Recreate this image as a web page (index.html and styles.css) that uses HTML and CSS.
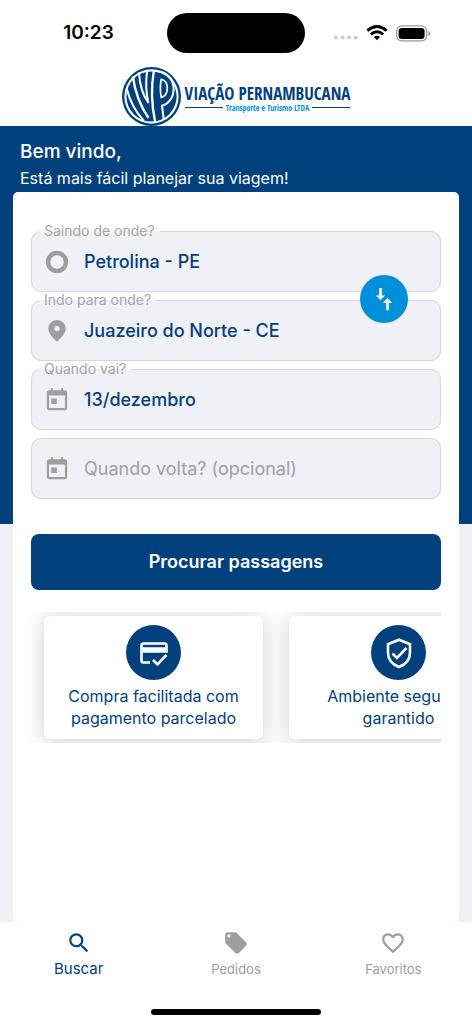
FILE: index.html
```html
<!DOCTYPE html>
<html lang="pt-BR">
<head>
<meta charset="utf-8">
<meta name="viewport" content="width=device-width, initial-scale=1">
<title>Viação Pernambucana</title>
<link rel="stylesheet" href="styles.css">
</head>
<body>
<div class="app">
  <div class="status">
    <span class="time">10:23</span>
    <span class="island"></span>
    <span class="signals">
      <svg width="24" height="5" viewBox="0 0 24 5" fill="#ccc"><circle cx="2" cy="2.5" r="2.1"/><circle cx="8.600" cy="2.500" r="2.100"/><circle cx="15.200" cy="2.500" r="2.100"/><circle cx="21.800" cy="2.500" r="2.100"/></svg>
      <svg width="22" height="16" viewBox="0 0 22 16" fill="none" stroke="#000" stroke-width="2.900"><path d="M1.400 5.600Q11-2.600 20.600 5.600"/><path d="M4.900 9.300Q11 4.100 17.100 9.300"/><path d="M7.900 12Q11 9.300 14.100 12L11 15.300Z" fill="#000" stroke="none"/></svg>
      <svg width="35" height="17" viewBox="0 0 35 17"><rect x=".7" y=".9" width="30" height="15" rx="5" fill="none" stroke="#999" stroke-width="1.200"/><rect x="2.600" y="2.900" width="26" height="11" rx="3.200"/><path d="M32.500 6v5q1.700-.8 1.700-2.500T32.500 6" fill="#888"/></svg>
    </span>
  </div>

  <header class="brand">
    <svg class="emblem" viewBox="10 8 174 174" role="img" aria-label="VP">
      <circle cx="97" cy="95" r="87" fill="#00407d"/>
      <circle cx="97" cy="95" r="80" fill="#fff"/>
      <circle cx="97" cy="95" r="74" fill="#00407d"/>
      <g fill="none" stroke="#fff" stroke-width="6">
        <path d="M24 72C33 108 48 138 74 166"/>
        <path d="M42 36C48 80 62 120 88 158" stroke-width="7"/>
        <path d="M60 24C62 60 72 92 88 114C80 82 80 50 84 20" stroke-width="6"/>
        <path d="M104 18C95 70 97 120 108 171" stroke-width="7"/>
        <path d="M126 44C122 62 122 80 126 98C149 92 150 50 126 44Z" stroke-width="5"/>
        <path d="M118 21C172 26 178 108 128 122L133 162" stroke-width="6"/>
      </g>
    </svg>
    <div class="wordmark">
      <strong>VIAÇÃO PERNAMBUCANA</strong>
      <span class="tagline">Transporte e Turismo LTDA</span>
    </div>
  </header>

  <main class="main">
    <div class="welcome">
      <h1>Bem vindo,</h1>
      <p>Está mais fácil planejar sua viagem!</p>
    </div>
    <section class="panel">
      <form class="search">
        <div class="field">
          <label for="from">Saindo de onde?</label>
          <svg class="icon" viewBox="0 0 24 24"><circle cx="12" cy="12" r="8.300" fill="none" stroke="#9e9e9e" stroke-width="4"/></svg>
          <input id="from" type="text" value="Petrolina - PE">
        </div>
        <div class="field">
          <label for="to">Indo para onde?</label>
          <svg class="icon" viewBox="0 0 24 24"><path d="M12 1.800c-4.500 0-8 3.500-8 7.900C4 14 7.300 17.500 12 22c4.700-4.500 8-8 8-12.300 0-4.400-3.500-7.900-8-7.900zm0 10.400a2.400 2.400 0 1 1 0-4.800 2.400 2.400 0 0 1 0 4.800z"/></svg>
          <input id="to" type="text" value="Juazeiro do Norte - CE">
          <button class="swap" type="button" aria-label="Inverter origem e destino">
            <svg width="24" height="24" viewBox="0 0 24 24" fill="#fff"><path d="M7.200 1h2.600v7.400h3.300L8.500 13.200 3.900 8.400h3.300z"/><path d="M14.200 23.300h2.600v-7.600h3.400L15.500 11l-4.700 4.700h3.400z"/></svg>
          </button>
        </div>
        <div class="field">
          <label for="depart">Quando vai?</label>
          <svg class="icon" viewBox="-.8 -.3 25.600 25.600"><path d="M19.500 3H18V1h-2v2H8V1H6v2H4.500C3 3 2 4 2 5.200v15C2 21.600 3 22.500 4.300 22.500h15.400c1.300 0 2.300-.9 2.300-2.300v-15C22 4 21 3 19.500 3zm.3 17.300H4.200V8h15.600zM6.300 11h5.500v5.500H6.300z"/></svg>
          <input id="depart" type="text" value="13/dezembro">
        </div>
        <div class="field">
          <svg class="icon" viewBox="-.8 -.3 25.600 25.600"><path d="M19.500 3H18V1h-2v2H8V1H6v2H4.500C3 3 2 4 2 5.200v15C2 21.600 3 22.500 4.300 22.500h15.400c1.300 0 2.300-.9 2.300-2.300v-15C22 4 21 3 19.500 3zm.3 17.300H4.200V8h15.600zM6.300 11h5.500v5.500H6.300z"/></svg>
          <input id="return" type="text" placeholder="Quando volta? (opcional)" aria-label="Quando volta? (opcional)">
        </div>
        <button class="submit" type="submit">Procurar passagens</button>
      </form>
      <div class="carousel">
        <article class="benefit">
          <span class="disc"><svg width="34" height="34" viewBox="0 0 34 34" fill="none" stroke="#fff" stroke-width="2.600"><path d="M13 26.500H6.500Q4.500 26.500 4.500 24.500V9.500Q4.500 7.500 6.500 7.500H27.500Q29.500 7.500 29.500 9.500V17"/><path d="M4 14H30" stroke-width="5.500"/><path d="M16 24l4.500 4.500 9-9.500"/></svg></span>
          <p>Compra facilitada com pagamento parcelado</p>
        </article>
        <article class="benefit">
          <span class="disc"><svg width="34" height="34" viewBox="0 0 34 34" fill="none" stroke="#fff" stroke-width="2.600"><path d="M17 3.700L28 8.200V16.500C28 23.500 23.500 28.500 17 31 10.500 28.500 6 23.500 6 16.500V8.200Z"/><path d="M10.500 17.500l4.500 4.500 9.500-10"/></svg></span>
          <p>Ambiente seguro e garantido</p>
        </article>
      </div>
    </section>
  </main>

  <nav class="tabs">
    <a class="tab active" href="#buscar">
      <svg class="icon" viewBox="0 0 24 24"><path d="M15.500 14h-.79l-.28-.27A6.470 6.470 0 0 0 16 9.500 6.500 6.500 0 1 0 9.500 16c1.610 0 3.090-.59 4.230-1.570l.27.28v.79l5 4.990L20.490 19l-4.990-5zm-6 0C7.010 14 5 11.990 5 9.500S7.010 5 9.500 5 14 7.010 14 9.500 11.990 14 9.500 14z"/></svg>
      <span>Buscar</span>
    </a>
    <a class="tab" href="#pedidos">
      <svg class="icon" viewBox="0 0 24 24"><path d="M21.410 11.580l-9-9C12.050 2.220 11.550 2 11 2H4c-1.100 0-2 .9-2 2v7c0 .55.22 1.050.59 1.420l9 9c.36.36.86.58 1.410.58s1.050-.22 1.410-.59l7-7c.37-.36.59-.86.59-1.410s-.23-1.060-.59-1.420zM5.500 7A1.500 1.500 0 1 1 5.500 4a1.500 1.500 0 0 1 0 3z"/></svg>
      <span>Pedidos</span>
    </a>
    <a class="tab" href="#favoritos">
      <svg class="icon" viewBox="0 0 24 24"><path d="M16.500 3c-1.740 0-3.410.81-4.500 2.090C10.910 3.810 9.240 3 7.500 3 4.420 3 2 5.420 2 8.500c0 3.780 3.400 6.860 8.550 11.540L12 21.350l1.450-1.320C18.600 15.360 22 12.280 22 8.500 22 5.420 19.580 3 16.500 3zm-4.400 15.550l-.1.100-.1-.1C7.140 14.240 4 11.390 4 8.500 4 6.500 5.500 5 7.500 5c1.540 0 3.040.99 3.570 2.360h1.870C13.460 5.990 14.960 5 16.500 5c2 0 3.500 1.500 3.500 3.500 0 2.890-3.140 5.740-7.900 10.050z"/></svg>
      <span>Favoritos</span>
    </a>
  </nav>
  <div class="home"></div>
</div>
</body>
</html>
```
FILE: styles.css
```css
* { box-sizing: border-box; }
body {
  margin: 0;
  background: #fff;
  color: #00407d;
  font-family: Inter, Roboto, sans-serif;
}
h1, p { margin: 0; font-weight: 400; }
svg { display: block; flex: none; }
.app { min-height: 100vh; display: flex; flex-direction: column; }

.status {
  height: 66px;
  display: grid;
  grid-template-columns: 1fr auto 1fr;
  align-items: center;
  color: #000;
}
.time { padding-left: 10px; text-align: center; font-size: 19px; font-weight: 600; line-height: 24px; }
.island { width: 138px; height: 40px; border-radius: 20px; background: #000; }
.signals { display: flex; align-items: center; justify-content: flex-end; gap: 8px; padding-right: 41px; }
.signals svg:first-child { margin-top: 8px; }

.brand { height: 60px; display: flex; justify-content: center; align-items: center; gap: 4px; }
.emblem { width: 59px; height: 59px; }
.wordmark { display: flex; flex-direction: column; padding-top: 3px; }
.wordmark strong { font: 700 17px/20px "Liberation Sans Narrow", "Open Sans Condensed", Lato, sans-serif; white-space: nowrap; }
.tagline {
  display: flex;
  align-items: center;
  gap: 3px;
  color: #008fd9;
  font: 8px/8px "Liberation Sans Narrow", "Open Sans Condensed", Lato, sans-serif;
  white-space: nowrap;
}
.tagline::before, .tagline::after { content: ""; flex: 1; height: 1px; background: #00407d; }

.main {
  flex: 1;
  display: flex;
  flex-direction: column;
  padding: 0 13px;
  background: linear-gradient(#00407d 398px, #f0f1f6 398px);
}
.welcome { padding: 12px 7px 1px; color: #fff; }
.welcome h1 { font-size: 19px; line-height: 27px; font-weight: 500; }
.welcome p { font-size: 16px; line-height: 26px; }
.panel { flex: 1; background: #fff; border-radius: 5px; padding: 39px 18px 24px; }

.search { display: flex; flex-direction: column; gap: 8px; }
.field {
  position: relative;
  height: 61px;
  display: flex;
  align-items: center;
  gap: 14px;
  padding: 0 12px;
  border: 1px solid #d5d6da;
  border-radius: 10px;
  background: #f0f1f6;
}
.field label {
  position: absolute;
  top: -9px;
  left: 7px;
  padding: 0 5px;
  color: #a5a5a9;
  font-size: 14px;
  line-height: 16px;
  background: linear-gradient(#fff 8px, #f0f1f6 8px);
}
.icon { width: 26px; height: 26px; fill: #9e9e9e; }
.field input {
  flex: 1;
  min-width: 0;
  padding: 0;
  border: 0;
  outline: 0;
  background: none;
  color: #00407d;
  font: 500 18px/24px Inter, Roboto, sans-serif;
}
.field input::placeholder { color: #a0a0a3; font-weight: 400; opacity: 1; }
.swap {
  position: absolute;
  top: -26px;
  right: 32px;
  width: 48px;
  height: 48px;
  display: grid;
  place-items: center;
  padding: 0;
  border: 0;
  border-radius: 50%;
  background: #008fd9;
}
.submit {
  height: 56px;
  margin-top: 27px;
  border: 0;
  border-radius: 8px;
  background: #00407d;
  color: #fff;
  font: 600 18px/24px Inter, Roboto, sans-serif;
}

.carousel {
  display: flex;
  gap: 26px;
  margin-top: 22px;
  padding: 4px 13px;
  overflow: hidden;
}
.benefit {
  flex: none;
  width: 219px;
  height: 123px;
  display: flex;
  flex-direction: column;
  align-items: center;
  gap: 5px;
  padding: 9px 20px;
  border-radius: 6px;
  background: #fff;
  box-shadow: 0 2px 22px rgba(0, 0, 0, 0.2);
}
.disc { flex: none; width: 55px; height: 55px; display: grid; place-items: center; border-radius: 50%; background: #00407d; }
.benefit p { text-align: center; font-size: 16px; line-height: 22px; }

.tabs { height: 80px; display: grid; grid-template-columns: repeat(3, 1fr); background: #fff; }
.tab {
  display: flex;
  flex-direction: column;
  align-items: center;
  gap: 3px;
  padding-top: 8px;
  color: #9e9e9e;
  font-size: 13px;
  line-height: 20px;
  text-decoration: none;
}
.active { color: #00407d; font-size: 15px; }
.active .icon { fill: #00407d; }
.home { width: 36%; height: 6px; margin: 7px auto 9px; border-radius: 3px; background: #000; }
```
